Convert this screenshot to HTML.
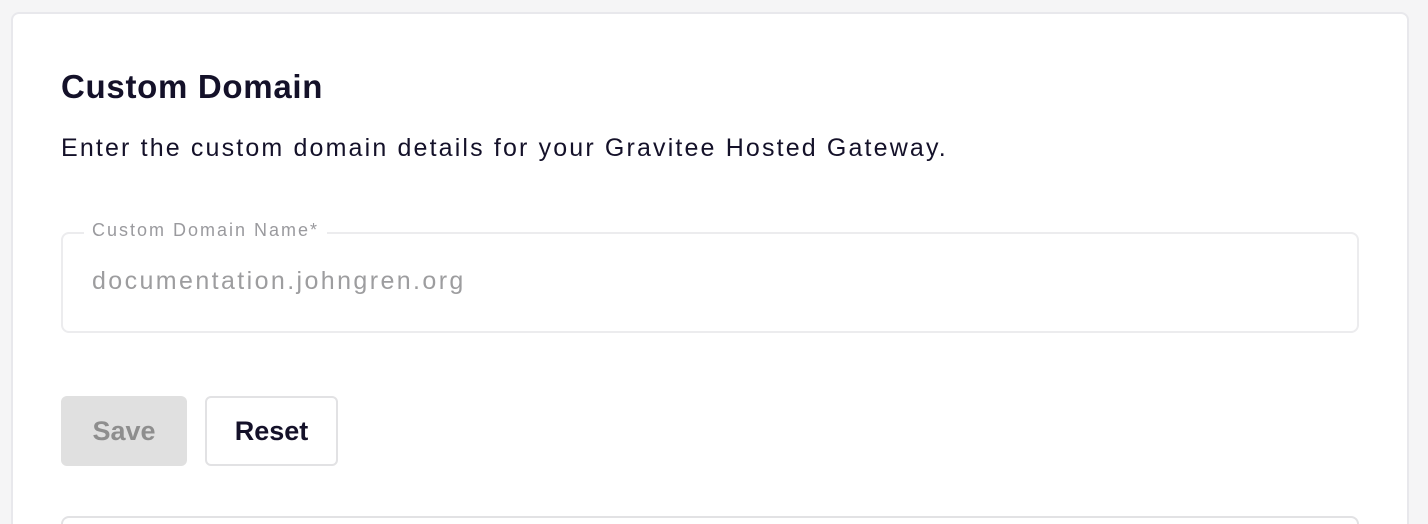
<!DOCTYPE html>
<html><head><style>
*{margin:0;padding:0;box-sizing:border-box}
html,body{width:1428px;height:524px;overflow:hidden}
body{background:#f5f5f6;font-family:"Liberation Sans",sans-serif;position:relative}
.card{position:absolute;left:11px;top:12px;width:1398px;height:512px;background:#fff;border:2px solid #e8e8ec;border-bottom:none;border-radius:8px 8px 0 0}
.t{position:absolute;left:61px;top:68px;font-size:33px;font-weight:bold;color:#141129;letter-spacing:0.7px}
.s{position:absolute;left:61px;top:134px;font-size:25px;color:#141129;letter-spacing:2.15px}
.f{position:absolute;left:61px;top:232px;width:1298px;height:101px;border:2px solid #ececee;border-radius:8px}
.l{position:absolute;left:84px;top:220px;padding:0 8px;background:#fff;font-size:18px;color:#9a9a9e;letter-spacing:2px}
.v{position:absolute;left:92px;top:267px;font-size:25px;color:#9d9d9f;letter-spacing:2.4px}
.b{position:absolute;top:396px;height:70px;border-radius:6px;font-size:27px;font-weight:bold;display:flex;align-items:center;justify-content:center}
.save{left:61px;width:126px;background:#e0e0e0;color:#8e8e8e}
.reset{left:205px;width:133px;border:2px solid #e2e2e4;color:#141129;background:#fff}
.bot{position:absolute;left:61px;top:516px;width:1298px;height:8px;border:2px solid #e2e2e4;border-bottom:none;border-radius:8px 8px 0 0}
</style></head><body>
<div class="card"></div>
<div class="t">Custom Domain</div>
<div class="s">Enter the custom domain details for your Gravitee Hosted Gateway.</div>
<div class="f"></div>
<div class="l">Custom Domain Name*</div>
<div class="v">documentation.johngren.org</div>
<div class="b save">Save</div>
<div class="b reset">Reset</div>
<div class="bot"></div>
</body></html>
